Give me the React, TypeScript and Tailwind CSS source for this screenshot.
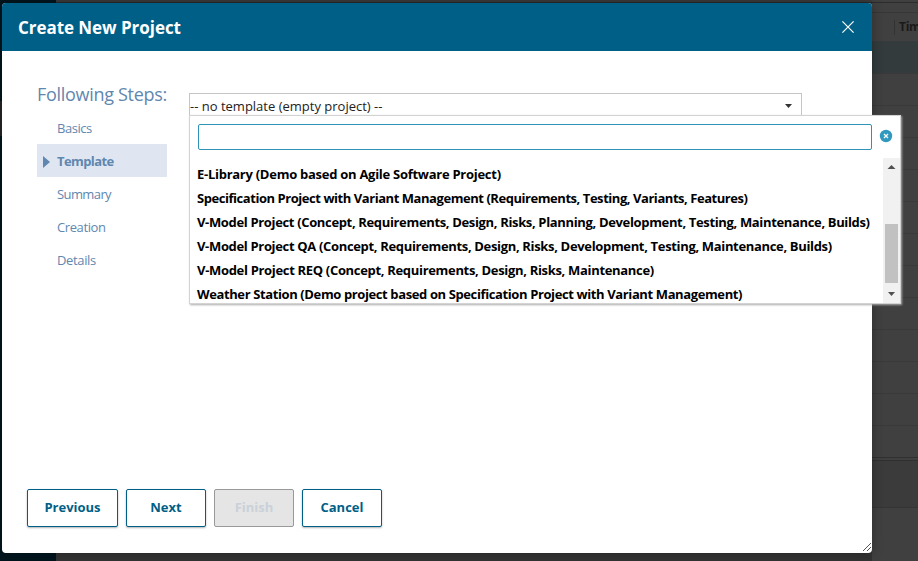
import React from "react";

const steps = [
  { label: "Basics", track: "tracking-[-0.45px]" },
  { label: "Template", track: "tracking-[-0.6px]" },
  { label: "Summary", track: "tracking-[-0.6px]" },
  { label: "Creation", track: "tracking-[-0.4px]" },
  { label: "Details", track: "tracking-[-0.35px]" },
];

const options = [
  { label: "E-Library (Demo based on Agile Software Project)", track: "tracking-[-0.27px]" },
  { label: "Specification Project with Variant Management (Requirements, Testing, Variants, Features)", track: "tracking-[-0.45px]" },
  { label: "V-Model Project (Concept, Requirements, Design, Risks, Planning, Development, Testing, Maintenance, Builds)", track: "tracking-[-0.345px]" },
  { label: "V-Model Project QA (Concept, Requirements, Design, Risks, Development, Testing, Maintenance, Builds)", track: "tracking-[-0.335px]" },
  { label: "V-Model Project REQ (Concept, Requirements, Design, Risks, Maintenance)", track: "tracking-[-0.32px]" },
  { label: "Weather Station (Demo project based on Specification Project with Variant Management)", track: "tracking-[-0.385px]" },
];

const buttons = [
  { label: "Previous", width: "w-[91px]", disabled: false },
  { label: "Next", width: "w-20", disabled: false },
  { label: "Finish", width: "w-20", disabled: true },
  { label: "Cancel", width: "w-20", disabled: false },
];

function Backdrop() {
  return (
    <div className="flex h-full w-full bg-[#333333]">
      <div className="flex w-14 flex-col">
        <div className="h-[101px] bg-[#00151e]" />
        <div className="h-[35px] bg-[#262626]" />
        <div className="grow bg-[#00151e]" />
      </div>
      <div className="flex grow flex-col">
        <div className="h-[2px] bg-[#3b3b3b]" />
        <div className="h-px bg-[#292929]" />
        <div className="grow" />
      </div>
      <div className="flex w-[46px] flex-col overflow-hidden bg-[#404040]">
        <div className="h-[3px] border-b border-[#2c2c2c]" />
        <div className="h-[10px] border-b border-[#373737]" />
        <div className="flex h-7 items-center pl-[22px]">
          <div className="h-[15px] w-px shrink-0 bg-[#333]" />
          <span className="ml-1 text-[12px] font-bold tracking-[-0.3px] text-[#191919]">Tim</span>
        </div>
        <div className="h-8 bg-[#333b3d]" />
        {Array.from({ length: 12 }, (_, i) => (
          <div key={i} className="h-[33px] border-t border-[#3a3a3a] not-first:-mb-px first:border-0" />
        ))}
        <div className="h-1 border-y border-[#303030]" />
        <div className="h-[47px] border-b border-[#343434] bg-[#3b3b3b]" />
      </div>
    </div>
  );
}

function Dropdown() {
  return (
    <div className="absolute top-[112px] left-[187px] flex h-[189px] w-[712px] flex-col border border-[#d3d3d3] bg-white shadow-[1px_1px_2px_#aaa]">
      <div className="flex h-[42px] shrink-0 items-start pt-2 pl-2">
        <div className="h-[26px] w-[674px] rounded-[2px] border border-[#2e93b8]" />
        <svg className="mt-[5px] ml-[7px] h-[14px] w-[14px]" viewBox="0 0 14 14">
          <circle cx="7" cy="7" r="6.2" fill="#3199bd" />
          <path d="M5 5l4 4M9 5l-4 4" stroke="#fff" strokeWidth="1.2" />
        </svg>
      </div>
      <div className="flex min-h-0 grow">
        <ul className="min-w-0 grow overflow-hidden pt-1 pl-[7px]">
          {options.map((o) => (
            <li key={o.label} className={`h-6 text-[13px] leading-6 font-bold whitespace-nowrap text-black ${o.track}`}>{o.label}</li>
          ))}
        </ul>
        <div className="flex w-[17px] shrink-0 flex-col items-center bg-[#f1f1f1]">
          <svg className="h-[17px] w-[17px]" viewBox="0 0 17 17" fill="#505050"><path d="M8.5 7l4 4h-8z" /></svg>
          <div className="mt-[49px] h-[59px] w-[13px] bg-[#c1c1c1]" />
          <svg className="mt-[3px] h-[17px] w-[17px]" viewBox="0 0 17 17" fill="#505050"><path d="M5 6h7l-3.5 4z" /></svg>
        </div>
      </div>
    </div>
  );
}

export default function App() {
  return (
    <div className="relative h-[561px] w-[918px] overflow-hidden font-['Open_Sans','Noto_Sans',sans-serif]">
      <Backdrop />
      <div className="absolute top-[3px] left-[2px] flex h-[550px] w-[870px] flex-col rounded-[4px] bg-white shadow-[0_0_12px_rgba(0,0,0,0.3)]">
        <header className="flex h-12 shrink-0 items-center justify-between rounded-t-[4px] bg-[#005f87] pr-[18px] pl-4">
          <h1 className="mt-0.5 text-[17px] font-bold tracking-[-0.05px] text-white">Create New Project</h1>
          <svg className="h-3 w-3" viewBox="0 0 12 12" stroke="#fff" strokeWidth="1.2"><path d="M.4.4l11.2 11.2M11.6.4L.4 11.6" /></svg>
        </header>
        <main className="flex grow items-start pl-[35px]">
          <nav className="w-[130px] pt-[29px]">
            <h2 className="h-[31px] text-[18px] leading-7 tracking-[-0.3px] whitespace-nowrap text-[#5f87af]">Following Steps:</h2>
            {steps.map(({ label, track }) =>
              label === "Template" ? (
                <div key={label} className={`flex h-[33px] items-center bg-[#dfe6f1] pt-0.5 pl-[6px] text-[13px] font-bold text-[#5f87af] ${track}`}>
                  <svg className="mr-[7px] h-3 w-[7px]" viewBox="0 0 7 12" fill="#5f87af"><path d="M0 0l7 6-7 6z" /></svg>
                  {label}
                </div>
              ) : (
                <div key={label} className={`flex h-[33px] items-center pt-0.5 pl-5 text-[13px] text-[#5f87af] ${track}`}>{label}</div>
              ),
            )}
          </nav>
          <div className="mt-[42px] ml-[22px] flex h-7 w-[613px] items-center justify-between border border-[#c5c5c5] pr-[9px]">
            <span className="text-[13px] text-[#222]">-- no template (empty project) --</span>
            <svg className="mb-0.5 h-1 w-[7px]" viewBox="0 0 7 4" fill="#333"><path d="M0 0h7L3.5 4z" /></svg>
          </div>
        </main>
        <footer className="mb-[26px] ml-[25px] flex gap-2">
          {buttons.map((b) => (
            <button
              key={b.label}
              disabled={b.disabled}
              className={`h-[38px] rounded-[2px] border text-[13px] font-bold ${b.width} ${
                b.disabled
                  ? "border-[#999] bg-[#e5e5e5] text-[#c9d1d9]"
                  : "border-[#005f87] bg-white text-[#005f87] shadow-[0_1px_2px_rgba(0,0,0,0.3)]"
              }`}
            >
              {b.label}
            </button>
          ))}
        </footer>
        <svg className="absolute right-[1px] bottom-[2px] h-2 w-2" viewBox="0 0 8 8" stroke="#555" strokeWidth="1" shapeRendering="crispEdges">
          <path d="M0 8L8 0M4 8l4-4" />
        </svg>
        <Dropdown />
      </div>
    </div>
  );
}
